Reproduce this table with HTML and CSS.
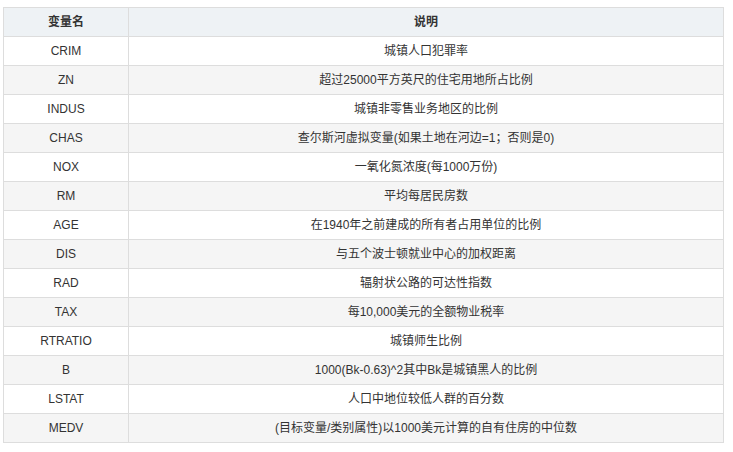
FILE: index.html
```html
<!DOCTYPE html>
<html lang="zh">
<head>
<meta charset="utf-8">
<link rel="stylesheet" href="styles.css">
</head>
<body>
<table class="data">
<thead>
<tr><th class="c1">变量名</th><th>说明</th></tr>
</thead>
<tbody>
<tr><td>CRIM</td><td>城镇人口犯罪率</td></tr>
<tr><td>ZN</td><td>超过25000平方英尺的住宅用地所占比例</td></tr>
<tr><td>INDUS</td><td>城镇非零售业务地区的比例</td></tr>
<tr><td>CHAS</td><td>查尔斯河虚拟变量(如果土地在河边=1；否则是0)</td></tr>
<tr><td>NOX</td><td>一氧化氮浓度(每1000万份)</td></tr>
<tr><td>RM</td><td>平均每居民房数</td></tr>
<tr><td>AGE</td><td>在1940年之前建成的所有者占用单位的比例</td></tr>
<tr><td>DIS</td><td>与五个波士顿就业中心的加权距离</td></tr>
<tr><td>RAD</td><td>辐射状公路的可达性指数</td></tr>
<tr><td>TAX</td><td>每10,000美元的全额物业税率</td></tr>
<tr><td>RTRATIO</td><td>城镇师生比例</td></tr>
<tr><td>B</td><td>1000(Bk-0.63)^2其中Bk是城镇黑人的比例</td></tr>
<tr><td>LSTAT</td><td>人口中地位较低人群的百分数</td></tr>
<tr><td>MEDV</td><td>(目标变量/类别属性)以1000美元计算的自有住房的中位数</td></tr>
</tbody>
</table>
</body>
</html>
```

FILE: styles.css
```css
html, body {
  margin: 0;
  padding: 0;
  background: #ffffff;
}
body {
  padding: 7px 9px 0 3px;
  font-family: "Liberation Sans", "Noto Sans CJK SC", sans-serif;
  font-size: 12px;
  color: #333333;
}
.data {
  width: 721px;
  border-collapse: collapse;
  border-spacing: 0;
  border: 1px solid #dddddd;
}
.data th,
.data td {
  border: 1px solid #dddddd;
  height: 28px;
  padding: 0 8px;
  text-align: center;
  vertical-align: middle;
  line-height: 16px;
}
.data th {
  background: #eef2f5;
  font-weight: bold;
  color: #333333;
}
.data th.c1 {
  width: 108px;
}
.data tbody tr:nth-child(even) td {
  background: #f5f5f5;
}
```
